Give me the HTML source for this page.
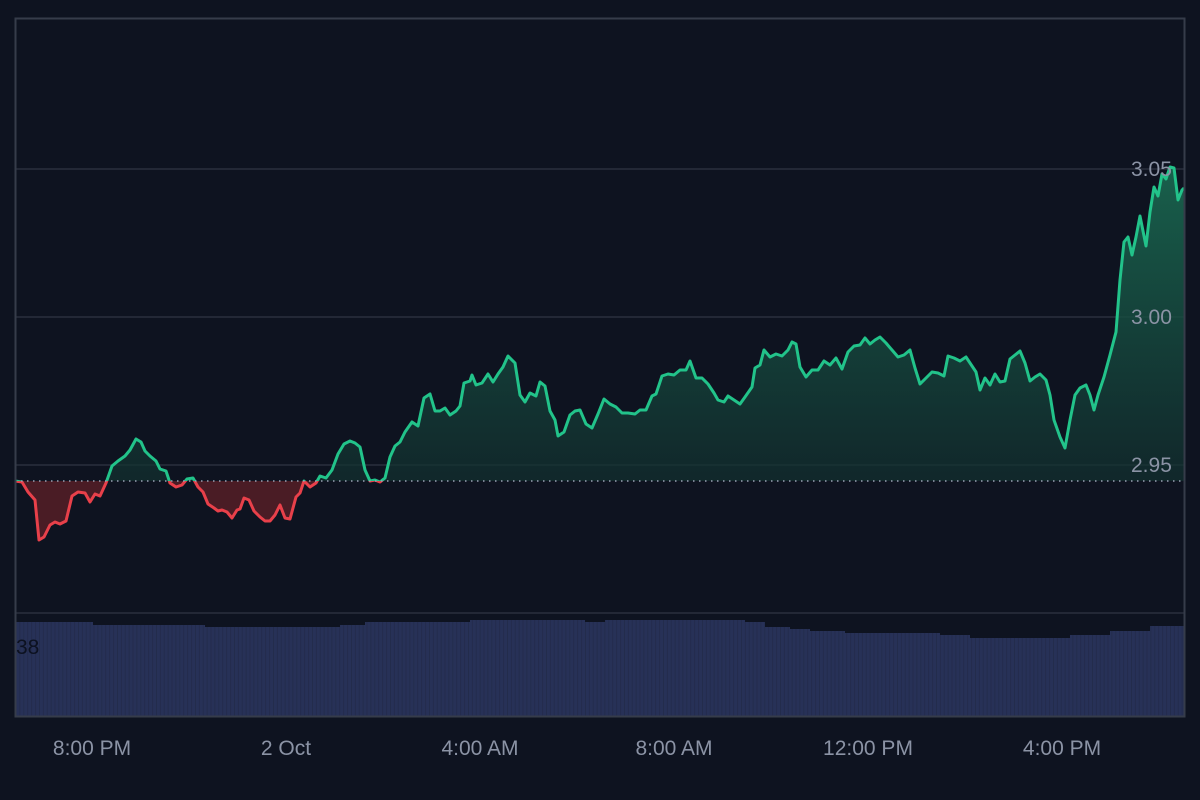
<!DOCTYPE html>
<html><head><style>
html,body{margin:0;padding:0;background:#0e1320;width:1200px;height:800px;overflow:hidden;font-family:"Liberation Sans",sans-serif}
</style></head><body>
<svg width="1200" height="800" xmlns="http://www.w3.org/2000/svg" style="position:absolute;left:0;top:0">
<defs>
<linearGradient id="gg" x1="0" y1="160" x2="0" y2="481" gradientUnits="userSpaceOnUse">
<stop offset="0" stop-color="#1a6b52" stop-opacity="0.9"/><stop offset="1" stop-color="#12302f" stop-opacity="0.7"/></linearGradient>
<clipPath id="up"><rect x="0" y="0" width="1200" height="481"/></clipPath>
<clipPath id="dn"><rect x="0" y="481" width="1200" height="300"/></clipPath>
<pattern id="vb" width="3.9" height="10" patternUnits="userSpaceOnUse"><rect width="3.9" height="10" fill="#273157"/><rect width="0.8" height="10" fill="#222a4a"/></pattern>
<polygon id="fillp" points="15,481 15,481 22,482 28,492 35,500 39,540 44,537 50,525 55,522 60,524 66,521 72,496 78,492 85,493 90,502 95,494 100,496 106,483 112,466 118,461 125,456 130,450 136,439 141,442 145,451 150,456 156,461 160,469 166,471 170,483 176,487 182,485 187,479 193,478 198,487 203,492 208,504 214,508 218,511 222,510 227,512 232,518 237,510 240,509 244,498 249,500 254,511 260,517 265,521 270,521 275,515 280,505 285,518 290,519 296,497 300,493 304,481 310,487 316,483 320,476 326,478 332,470 338,454 344,444 350,441 355,443 360,447 365,470 370,481 375,480 380,482 385,478 390,457 395,446 400,442 405,432 412,422 418,426 424,398 430,394 435,411 440,411 445,408 450,415 456,411 460,406 464,383 470,381 472,375 476,385 482,383 488,374 493,382 498,374 503,367 508,356 515,363 520,395 525,402 530,393 536,396 540,382 545,386 550,411 555,420 558,436 564,432 570,415 575,411 580,410 586,424 592,428 598,414 604,399 610,404 616,407 622,413 628,413 635,414 640,410 646,410 652,396 656,394 662,376 668,374 674,375 680,370 686,370 690,361 696,378 702,378 708,384 714,393 718,400 724,402 728,396 734,400 740,404 745,397 752,387 755,368 760,365 764,350 770,357 776,354 782,356 788,350 792,342 796,344 800,367 806,377 812,370 818,370 824,361 830,365 836,358 842,369 848,352 854,346 860,345 865,338 870,344 875,340 880,337 886,343 892,350 898,357 904,355 910,350 915,368 920,384 926,378 932,372 938,373 944,376 948,356 954,358 960,361 966,357 972,366 976,372 980,390 985,378 990,385 995,374 1000,382 1005,381 1010,359 1015,355 1020,351 1025,363 1030,381 1035,377 1040,374 1046,380 1050,395 1054,420 1060,437 1065,448 1070,420 1075,395 1080,388 1086,385 1090,395 1094,410 1098,395 1104,377 1110,355 1116,332 1120,280 1124,242 1128,237 1132,255 1136,237 1140,216 1146,246 1150,212 1154,187 1158,196 1162,174 1166,179 1170,167 1174,168 1178,200 1182,190 1184,188 1184,481"/>
<polyline id="ln" points="15,481 22,482 28,492 35,500 39,540 44,537 50,525 55,522 60,524 66,521 72,496 78,492 85,493 90,502 95,494 100,496 106,483 112,466 118,461 125,456 130,450 136,439 141,442 145,451 150,456 156,461 160,469 166,471 170,483 176,487 182,485 187,479 193,478 198,487 203,492 208,504 214,508 218,511 222,510 227,512 232,518 237,510 240,509 244,498 249,500 254,511 260,517 265,521 270,521 275,515 280,505 285,518 290,519 296,497 300,493 304,481 310,487 316,483 320,476 326,478 332,470 338,454 344,444 350,441 355,443 360,447 365,470 370,481 375,480 380,482 385,478 390,457 395,446 400,442 405,432 412,422 418,426 424,398 430,394 435,411 440,411 445,408 450,415 456,411 460,406 464,383 470,381 472,375 476,385 482,383 488,374 493,382 498,374 503,367 508,356 515,363 520,395 525,402 530,393 536,396 540,382 545,386 550,411 555,420 558,436 564,432 570,415 575,411 580,410 586,424 592,428 598,414 604,399 610,404 616,407 622,413 628,413 635,414 640,410 646,410 652,396 656,394 662,376 668,374 674,375 680,370 686,370 690,361 696,378 702,378 708,384 714,393 718,400 724,402 728,396 734,400 740,404 745,397 752,387 755,368 760,365 764,350 770,357 776,354 782,356 788,350 792,342 796,344 800,367 806,377 812,370 818,370 824,361 830,365 836,358 842,369 848,352 854,346 860,345 865,338 870,344 875,340 880,337 886,343 892,350 898,357 904,355 910,350 915,368 920,384 926,378 932,372 938,373 944,376 948,356 954,358 960,361 966,357 972,366 976,372 980,390 985,378 990,385 995,374 1000,382 1005,381 1010,359 1015,355 1020,351 1025,363 1030,381 1035,377 1040,374 1046,380 1050,395 1054,420 1060,437 1065,448 1070,420 1075,395 1080,388 1086,385 1090,395 1094,410 1098,395 1104,377 1110,355 1116,332 1120,280 1124,242 1128,237 1132,255 1136,237 1140,216 1146,246 1150,212 1154,187 1158,196 1162,174 1166,179 1170,167 1174,168 1178,200 1182,190 1184,188"/>
</defs>
<rect x="0" y="0" width="1200" height="800" fill="#0e1320"/>
<g stroke="#2a303d" stroke-width="1.5">
<line x1="15" y1="169" x2="1185" y2="169"/>
<line x1="15" y1="317" x2="1185" y2="317"/>
<line x1="15" y1="465" x2="1185" y2="465"/>
<line x1="15" y1="613" x2="1185" y2="613"/>
</g>
<path fill="url(#vb)" d="M16,716 L16,622 L93,622 L93,625 L205,625 L205,627 L340,627 L340,625 L365,625 L365,622 L470,622 L470,620 L585,620 L585,622 L605,622 L605,620 L745,620 L745,622 L765,622 L765,627 L790,627 L790,629 L810,629 L810,631 L845,631 L845,633 L940,633 L940,635 L970,635 L970,638 L1070,638 L1070,635 L1110,635 L1110,631 L1150,631 L1150,626 L1184,626 L1184,716 Z"/>
<text x="16" y="654" font-size="21" fill="#0c1120">38</text>
<g clip-path="url(#up)"><use href="#fillp" fill="url(#gg)"/></g>
<g clip-path="url(#dn)"><use href="#fillp" fill="#4a1c25"/></g>
<g clip-path="url(#up)"><use href="#ln" fill="none" stroke="#22c38a" stroke-width="3" stroke-linejoin="round"/></g>
<g clip-path="url(#dn)"><use href="#ln" fill="none" stroke="#e8404a" stroke-width="3" stroke-linejoin="round"/></g>
<line x1="15" y1="481" x2="1185" y2="481" stroke="#9aa3b5" stroke-width="1.5" stroke-dasharray="1.5,4.5"/>
<g font-size="21" fill="#8b93a5">
<text x="1131" y="176">3.05</text>
<text x="1131" y="324">3.00</text>
<text x="1131" y="472">2.95</text>
</g>
<rect x="15.5" y="18.5" width="1169" height="698" fill="none" stroke="#363c4a" stroke-width="2"/>
<g font-size="21" fill="#8b93a5" text-anchor="middle">
<text x="92" y="755">8:00 PM</text>
<text x="286" y="755">2 Oct</text>
<text x="480" y="755">4:00 AM</text>
<text x="674" y="755">8:00 AM</text>
<text x="868" y="755">12:00 PM</text>
<text x="1062" y="755">4:00 PM</text>
</g>
</svg>
</body></html>
